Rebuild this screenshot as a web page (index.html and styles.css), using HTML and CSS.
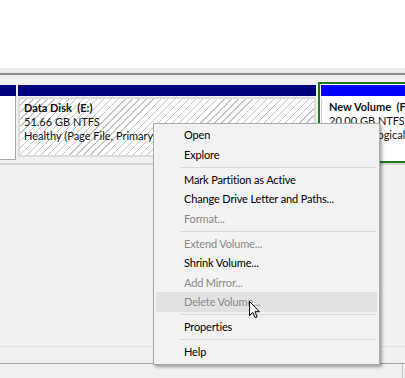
FILE: index.html
```html
<!DOCTYPE html>
<html lang="en">
<head>
    <meta charset="UTF-8">
    <meta name="viewport" content="width=device-width, initial-scale=1.0">
    <title>Disk Management</title>
    <link rel="stylesheet" href="styles.css">
</head>
<body>
    <div class="window">
        <div class="list-pane"></div>
        <div class="splitter"></div>

        <div class="disk-row">
            <div class="part part-cut">
                <div class="part-bar"></div>
                <div class="part-body"></div>
            </div>
            <div class="part part-data">
                <div class="part-bar"></div>
                <div class="part-body hatched">
                    <div class="part-name">Data Disk&nbsp; (E:)</div>
                    <div>51.66 GB NTFS</div>
                    <div class="clip">Healthy (Page File, Primary Partition)</div>
                </div>
            </div>
            <div class="part part-new">
                <div class="part-bar"></div>
                <div class="part-body">
                    <div class="part-name clip">New Volume&nbsp; (F:)</div>
                    <div>20.00 GB NTFS</div>
                    <div class="clip">Healthy (Logical Drive)</div>
                </div>
            </div>
        </div>

        <div class="graph-space"></div>
        <div class="legend-strip"></div>
        <div class="status-bar"></div>
    </div>

    <!-- context menu for the selected volume -->
    <div class="menu">
        <div class="item">Open</div>
        <div class="item">Explore</div>
        <div class="sep"></div>
        <div class="item">Mark Partition as Active</div>
        <div class="item">Change Drive Letter and Paths...</div>
        <div class="item disabled">Format...</div>
        <div class="sep"></div>
        <div class="item disabled">Extend Volume...</div>
        <div class="item">Shrink Volume...</div>
        <div class="item disabled">Add Mirror...</div>
        <div class="item disabled hover">Delete Volume...</div>
        <div class="sep"></div>
        <div class="item">Properties</div>
        <div class="sep"></div>
        <div class="item">Help</div>
    </div>

    <svg class="cursor" width="12" height="18" viewBox="0 0 12 18">
        <path d="M0.5 0.5 L0.5 14.5 L3.8 11.4 L6.2 16.8 L8.2 15.9 L5.9 10.7 L10.4 10.7 Z" fill="#fff" stroke="#000" stroke-width="1" stroke-linejoin="miter"/>
    </svg>
</body>
</html>
```

FILE: styles.css
```css
body {
    margin: 0;
    font-family: Lato, "Noto Sans", sans-serif;
    font-size: 11px;
    color: #111;
    background: #f0f0f0;
}
.window {
    display: flex;
    flex-direction: column;
    height: 378px;
    overflow: hidden;
}
.list-pane {
    height: 68px;
    background: #fff;
}
.splitter {
    height: 5px;
    background: #ebebeb;
    border-bottom: 2px solid #8e8e8e;
}
.disk-row {
    display: flex;
    gap: 2px;
    padding-top: 7px;
    height: 81px;
    border-bottom: 2px solid #d6d6d6;
}
.part {
    display: flex;
    flex-direction: column;
    flex-shrink: 0;
}
.part-bar {
    height: 11px;
    background: #000080;
}
.part-body {
    flex: 1;
    line-height: 14px;
    white-space: nowrap;
    overflow: hidden;
}
.part-name {
    font-weight: bold;
}
.clip {
    overflow: hidden;
}

.part-cut {
    width: 16px;
    padding-top: 3px;
    padding-bottom: 3px;
}
.part-cut .part-body {
    background: #fff;
    border-right: 1px solid #a8a8a8;
    border-bottom: 1px solid #a8a8a8;
}

.part-data {
    width: 298px;
    padding-top: 3px;
    padding-bottom: 6px;
}
.part-data .part-body {
    margin-top: 1px;
    border: 2px solid #dcdcdc;
    padding: 2px 4px;
}
.hatched {
    background: repeating-linear-gradient(135deg, #fff 0 4px, #c4c4c4 4px 5px);
}

.part-new {
    flex: 1 1 auto;
    min-width: 0;
    border: 2px solid #1f7a1f;
    border-right: none;
    padding: 1px 0 0 1px;
    background: #fff;
}
.part-new .part-bar {
    background: #0000ff;
}
.part-new .part-body {
    margin-top: 2px;
    border-left: 1px solid #cfcfcf;
    padding: 2px 0 0 7px;
}

.graph-space {
    flex: 1;
}
.legend-strip {
    height: 16px;
    border-top: 1px solid #dedede;
    border-bottom: 1px solid #a3a3a3;
}
.status-bar {
    height: 14px;
    border-right: 1px solid #c4c4c4;
    margin-right: 2px;
}

.menu {
    position: absolute;
    left: 153px;
    top: 123px;
    width: 225px;
    padding: 1px 0 2px;
    background: #f2f2f2;
    border: 1px solid #a9a9a9;
    box-shadow: 2px 2px 3px rgba(0, 0, 0, 0.35);
    color: #000;
    letter-spacing: -0.15px;
}
.item {
    height: 19.5px;
    line-height: 19.5px;
    margin: 0 2px;
    padding-left: 28px;
    white-space: nowrap;
}
.item.disabled {
    color: #8a8a8a;
}
.item.hover {
    background: #e2e2e2;
}
.sep {
    height: 1px;
    margin: 2.5px 3px 2px 26px;
    background: #d9d9d9;
}
.cursor {
    position: absolute;
    left: 249px;
    top: 301px;
}
```
